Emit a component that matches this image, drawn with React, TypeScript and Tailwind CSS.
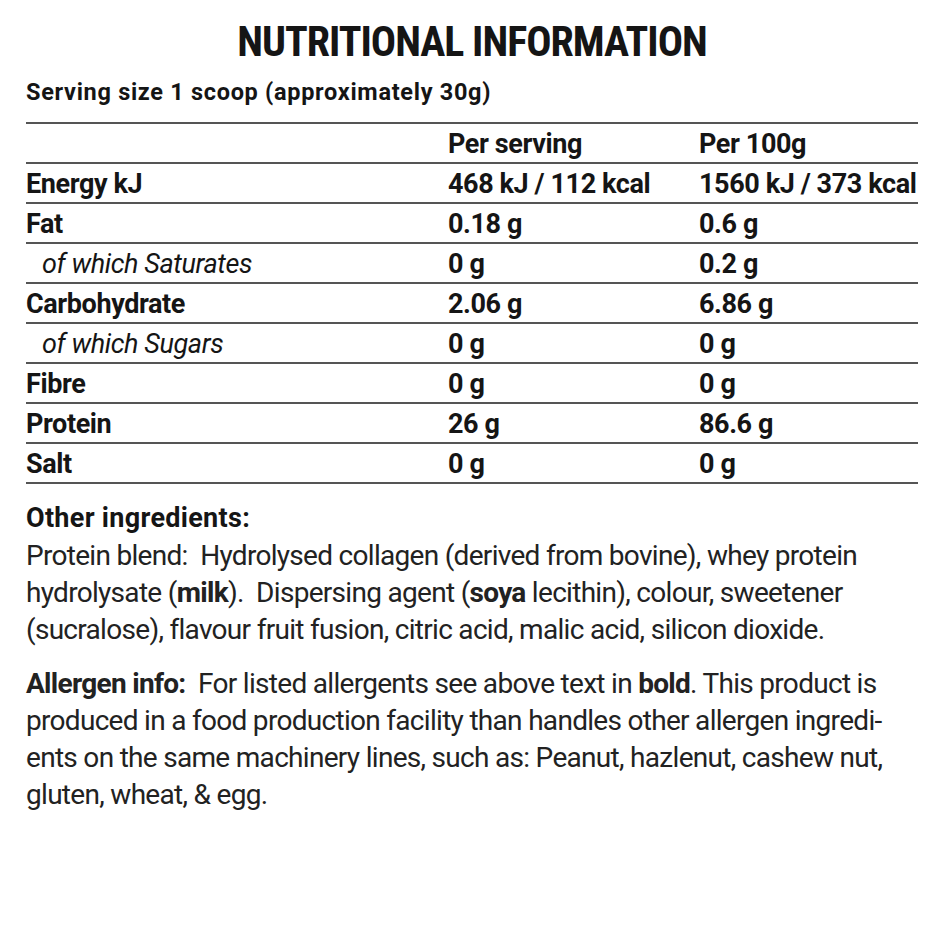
const rows = [
  { label: "Energy kJ", serving: "468 kJ / 112 kcal", per100: "1560 kJ / 373 kcal" },
  { label: "Fat", serving: "0.18 g", per100: "0.6 g" },
  { label: "of which Saturates", serving: "0 g", per100: "0.2 g", sub: true },
  { label: "Carbohydrate", serving: "2.06 g", per100: "6.86 g" },
  { label: "of which Sugars", serving: "0 g", per100: "0 g", sub: true },
  { label: "Fibre", serving: "0 g", per100: "0 g" },
  { label: "Protein", serving: "26 g", per100: "86.6 g" },
  { label: "Salt", serving: "0 g", per100: "0 g" },
];

export default function App() {
  return (
    <div className="w-[944px] h-[944px] bg-white text-[#151515] px-[26px] pt-[18px] font-['Roboto',sans-serif] font-stretch-condensed">
      <h1 className="text-center text-[42px] leading-[48px] font-bold tracking-[-1px]">NUTRITIONAL INFORMATION</h1>
      <p className="mt-[12px] text-[23.5px] leading-[28px] font-bold font-stretch-[90%] tracking-[0.7px]">Serving size 1 scoop (approximately 30g)</p>

      <div className="mt-[16px] border-t-2 border-[#555]">
        <div className="grid grid-cols-[422px_251px_1fr] h-[40px] items-center border-b-2 border-[#555] text-[27px] font-bold font-stretch-[90%] tracking-[-0.4px]">
          <span />
          <span>Per serving</span>
          <span>Per 100g</span>
        </div>
        {rows.map((r) => (
          <div key={r.label} className="grid grid-cols-[422px_251px_1fr] h-[40px] items-center border-b-2 border-[#555] text-[27px] font-bold font-stretch-[90%] tracking-[-0.4px]">
            <span className={r.sub ? "pl-[16px] italic font-normal" : ""}>{r.label}</span>
            <span>{r.serving}</span>
            <span>{r.per100}</span>
          </div>
        ))}
      </div>

      <div className="mt-[16px] text-[28px] leading-[37px] text-[#222] font-stretch-[90%] tracking-[-0.7px]">
        <p className="font-bold text-[27px] tracking-[0.3px] text-[#151515]">Other ingredients:</p>
        <p>
          Protein blend:&nbsp; Hydrolysed collagen (derived from bovine), whey protein
          <br />
          hydrolysate (<b>milk</b>).&nbsp; Dispersing agent (<b>soya</b> lecithin), colour, sweetener
          <br />
          (sucralose), flavour fruit fusion, citric acid, malic acid, silicon dioxide.
        </p>
        <p className="mt-[17px]">
          <b>Allergen info:</b>&nbsp; For listed allergents see above text in <b>bold</b>. This product is
          <br />
          produced in a food production facility than handles other allergen ingredi-
          <br />
          ents on the same machinery lines, such as: Peanut, hazlenut, cashew nut,
          <br />
          gluten, wheat, &amp; egg.
        </p>
      </div>
    </div>
  );
}
